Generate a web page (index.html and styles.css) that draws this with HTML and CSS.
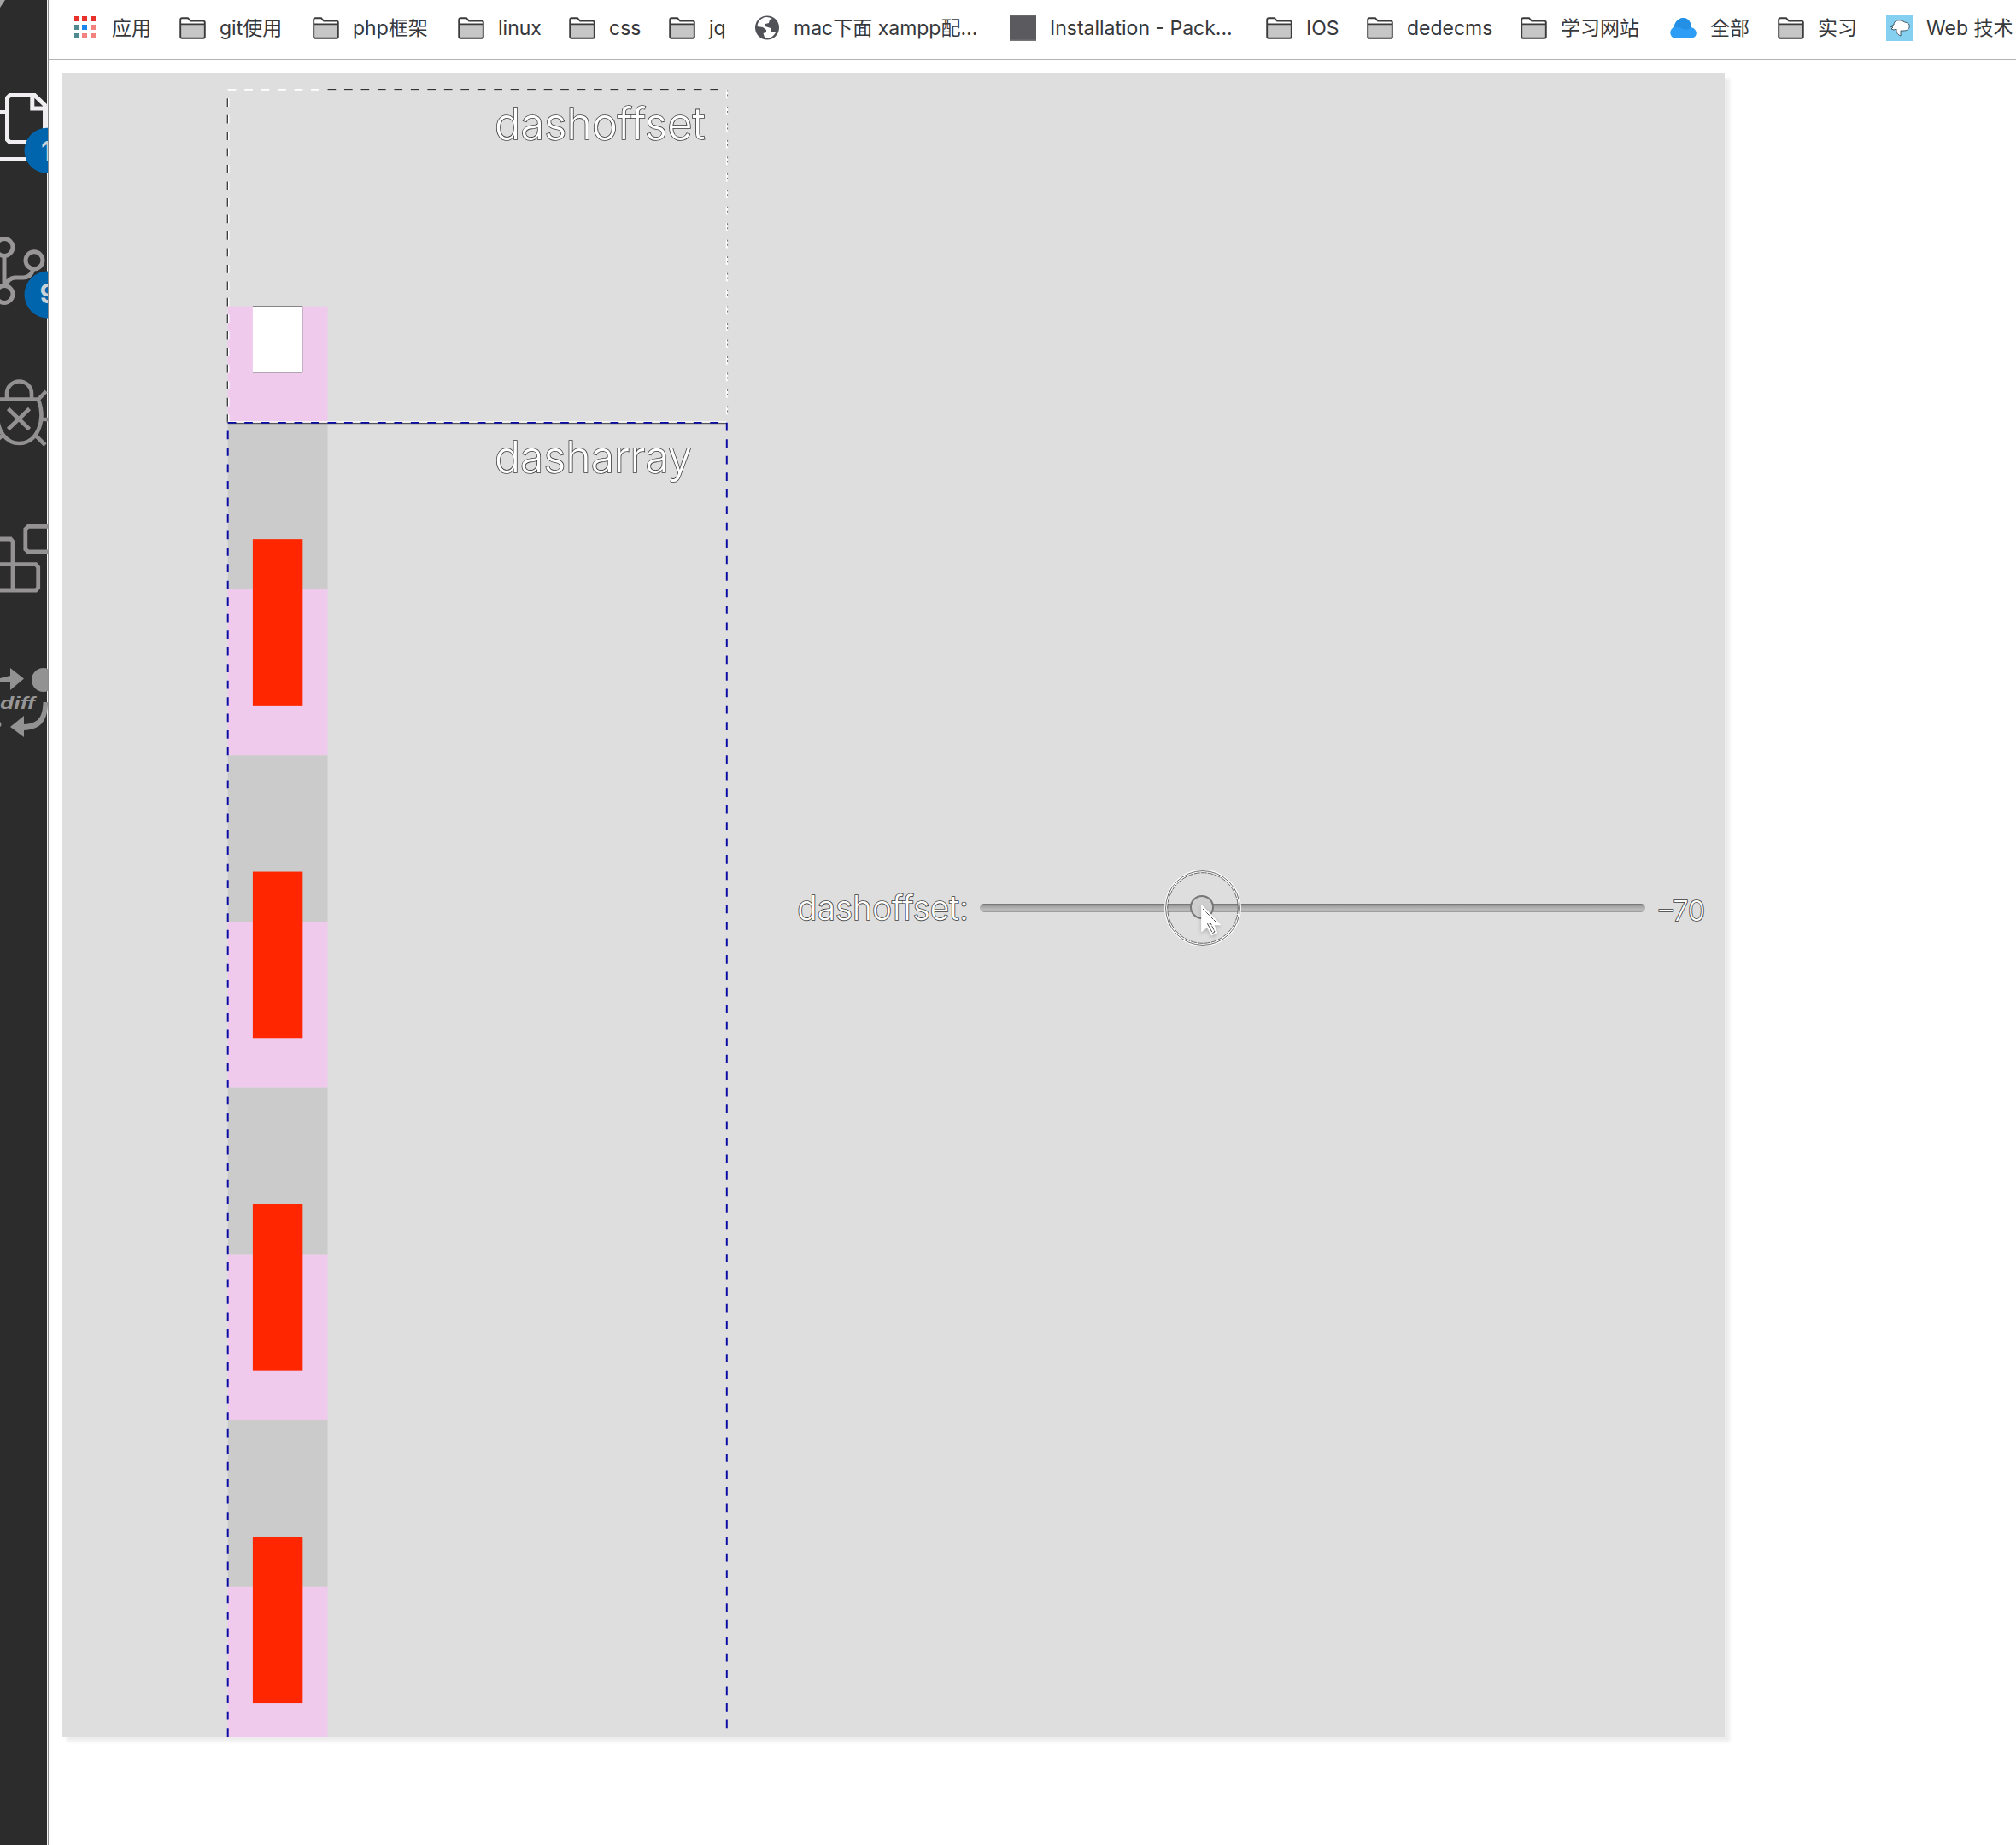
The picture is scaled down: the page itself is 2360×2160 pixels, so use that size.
FILE: index.html
```html
<!DOCTYPE html>
<html lang="zh">
<head>
<meta charset="utf-8">
<title>dashoffset</title>
<link rel="stylesheet" href="styles.css">
</head>
<body>
<svg class="defs" width="0" height="0">
  <symbol id="folder" viewBox="0 0 31 26">
    <path d="M1.2 23V3.2Q1.2 1.2 3.2 1.2H10L13 4.6H28Q29.8 4.6 29.8 6.4V23Q29.8 24.7 28 24.7H3Q1.2 24.7 1.2 23Z" fill="#fff"/>
    <path d="M2 9H29V24H2Z" fill="#c6c6c6"/>
    <path d="M1.2 23V3.2Q1.2 1.2 3.2 1.2H10L13 4.6H28Q29.8 4.6 29.8 6.4V23Q29.8 24.7 28 24.7H3Q1.2 24.7 1.2 23ZM1.2 8.4H29.8" fill="none" stroke="#3b3b3d" stroke-width="1.9"/>
  </symbol>
</svg>
<div class="window">
  <aside class="activity">
    <svg width="55" height="90" viewBox="0 0 55 90"><path d="M0 0H6L0 9Z" fill="#a5a3a3"/></svg>
    <svg width="56" height="160" viewBox="0 90 56 160">
      <g fill="none" stroke="#f0eef0" stroke-width="5">
        <path d="M52.5 124V166.5H11.500L8.500 163.500V114.500L11.500 111.500H40.500L54 124.500M37.800 111V127H55M0 131.500H7M0 186.500H34"/>
      </g>
      <circle cx="55" cy="176.300" r="26.500" fill="#0065ad"/>
      <text x="48" y="188" class="count">1</text>
    </svg>
    <svg width="56" height="170" viewBox="0 250 56 170">
      <g fill="none" stroke="#989696" stroke-width="5">
        <circle cx="5" cy="289.500" r="10"/><circle cx="5" cy="344.500" r="10"/><circle cx="40" cy="304.800" r="10"/>
        <path d="M5 299V335M39 315Q36 325 27 325H17Q10 326 7 333"/>
      </g>
      <circle cx="56" cy="345" r="27.500" fill="#0065ad"/>
      <text x="46.500" y="355" class="count">9</text>
    </svg>
    <svg width="56" height="160" viewBox="0 420 56 160">
      <g fill="none" stroke="#929090" stroke-width="4.600">
        <path d="M8 467V461A14 14 0 0 1 37 461V467M0 467.500H45L54 458M45 468C54 492 44 519 22.500 519C7 519 -3 504 -3 487M49 491H56M41 509L53 521M-2 514L4 509M9.500 478.500L34.500 502.500M34.500 478.500L9.500 502.500"/>
      </g>
    </svg>
    <svg width="56" height="160" viewBox="0 580 56 160">
      <g fill="none" stroke="#949292" stroke-width="4.800">
        <path d="M56 616.300H33L29.800 619.500V643L33 646H56M0 631H12.500L15 634V691M0 660.700H42L44.700 664V688L42 691H0"/>
      </g>
    </svg>
    <svg width="56" height="160" viewBox="0 740 56 160">
      <g fill="#929292">
        <path d="M12 782L28 794.500L12 808V798H0V794L12 791Z"/>
        <circle cx="51" cy="796" r="14"/>
        <path d="M12 851L28 838V848C43 847 50 842 50.500 822H56C56 846 46 854 28 855V863Z"/>
        <circle cx="-2" cy="848" r="3.500"/>
      </g>
      <text x="0" y="829.500" class="diff" textLength="41" lengthAdjust="spacingAndGlyphs">diff</text>
    </svg>
  </aside>
  <main class="browser">
    <nav class="bookmarks">
      <a class="mark"><svg class="ico" viewBox="0 0 31 31"><path fill="#e8302b" d="M1 2h5v6H1zM10 2h6v6h-6zM20 2h6v6h-6z"/><path fill="#4f8991" d="M1 12h5v6H1zM1 22h5v6H1z"/><path fill="#1c86ec" d="M10 12h6v6h-6z"/><path fill="#f3827d" d="M20 12h6v6h-6zM10 22h6v6h-6zM20 22h6v6h-6z"/></svg><span class="near">应用</span></a>
      <a class="mark"><svg class="ico folder"><use href="#folder"/></svg><span>git使用</span></a>
      <a class="mark"><svg class="ico folder"><use href="#folder"/></svg><span>php框架</span></a>
      <a class="mark"><svg class="ico folder"><use href="#folder"/></svg><span>linux</span></a>
      <a class="mark"><svg class="ico folder"><use href="#folder"/></svg><span>css</span></a>
      <a class="mark"><svg class="ico folder"><use href="#folder"/></svg><span>jq</span></a>
      <a class="mark"><svg class="ico" viewBox="0 0 31 31"><circle cx="16" cy="15.500" r="14" fill="#505257"/><path d="M14 3C9 4 4.500 9 4.500 14L11 15L15 18V21L11 22V25L15 27.500C20 28 24 25 26 21L21 20L20 16L14 14V11L18 10L19 6L22 5Q18 2.500 14 3Z" fill="#fff"/><path d="M5 15L11 20L13 27L8 25ZM19 9L22 12L26 11L25 17L22 14H18Z" fill="#505257"/></svg><span>mac下面 xampp配...</span></a>
      <a class="mark"><svg class="ico" viewBox="0 0 31 31"><path d="M0 0H31V31H0Z" fill="#5b5a5e"/><path d="M0 .7H31M0 30.300H31" stroke="#777579" stroke-width="1.400"/></svg><span>Installation - Pack...</span></a>
      <a class="mark"><svg class="ico folder"><use href="#folder"/></svg><span>IOS</span></a>
      <a class="mark"><svg class="ico folder"><use href="#folder"/></svg><span>dedecms</span></a>
      <a class="mark"><svg class="ico folder"><use href="#folder"/></svg><span>学习网站</span></a>
      <a class="mark"><svg class="ico" viewBox="0 0 31 31"><path d="M7 27.500C-1 27.500-2 17 5 15C5 9 10 4 15.500 4C21 4 25 9 24.500 15C33 17 33 27.500 24 27.500Z" fill="#2e9df5"/><path d="M5 15C5 9 10 4 15.500 4C21 4 25 9 24.500 15Q20 19 15 17Q10 14 5 15Z" fill="#238fe5"/></svg><span>全部</span></a>
      <a class="mark"><svg class="ico folder"><use href="#folder"/></svg><span>实习</span></a>
      <a class="mark"><svg class="ico" viewBox="0 0 31 31"><path d="M0 0H31V31H0Z" fill="#85cff1"/><path d="M5 14L9 12C9 7 14 6 19 7.500C22 10 26 9 27 12C28 17 25 19 20 19L17 19V25C12 23 12 20 12 17L9 18L6 17L8 15Z" fill="#fff" stroke="#354b57" stroke-width=".9"/></svg><span>Web 技术</span></a>
    </nav>
    <div class="page">
      <svg class="canvas" viewBox="0 0 500 500">
        <g class="pink">
          <rect x="50" y="70" width="30" height="35"/>
          <rect x="50" y="155" width="30" height="50"/>
          <rect x="50" y="255" width="30" height="50"/>
          <rect x="50" y="355" width="30" height="50"/>
          <rect x="50" y="455" width="30" height="45"/>
        </g>
        <g class="grey">
          <rect x="50" y="105" width="30" height="50"/>
          <rect x="50" y="205" width="30" height="50"/>
          <rect x="50" y="305" width="30" height="50"/>
          <rect x="50" y="405" width="30" height="50"/>
        </g>
        <g class="red">
          <rect x="57.500" y="140" width="15" height="50"/>
          <rect x="57.500" y="240" width="15" height="50"/>
          <rect x="57.500" y="340" width="15" height="50"/>
          <rect x="57.500" y="440" width="15" height="50"/>
        </g>
        <rect x="57.500" y="70" width="15" height="20" fill="#fff"/>
        <path d="M57.500 70H72.400V89.900H57.500" class="edge"/>
        <path d="M50 4.850H200M200 5V105" class="dash light"/>
        <path d="M50.200 105V5" class="dash light"/>
        <path d="M80 4.800H200" class="dash dark"/>
        <path d="M49.900 105V5" class="dash dark"/>
        <path d="M200.200 5V105" class="dash speck"/>
        <path d="M50 104.700H200" stroke="#f4f4f4" stroke-width=".35"/>
        <path d="M50 105.200H200" stroke="#55555c" stroke-width=".28"/>
        <rect x="50" y="105" width="150" height="400" class="dash blue"/>
        <text x="130.200" y="19.900" class="label" font-size="13" textLength="63.300" lengthAdjust="spacingAndGlyphs">dashoffset</text>
        <text x="130.200" y="119.900" class="label" font-size="13" textLength="59.300" lengthAdjust="spacingAndGlyphs">dasharray</text>
        <text x="221.200" y="254.600" class="label" font-size="10" textLength="51.500" lengthAdjust="spacingAndGlyphs">dashoffset:</text>
        <text x="480.300" y="254.800" class="label" font-size="8.200" textLength="13.800" lengthAdjust="spacingAndGlyphs">–70</text>
      </svg>
      <div class="slider">
        <div class="thumb"></div>
        <svg class="pointer" width="100" height="100" viewBox="0 0 100 100">
          <circle cx="50" cy="50" r="43" fill="none" stroke="#fff" stroke-width="3.200"/>
          <circle cx="50" cy="50" r="44" fill="none" stroke="#fff" stroke-width="1.400"/>
          <circle cx="50" cy="50" r="43.400" fill="none" stroke="#444" stroke-width=".8"/>
          <circle cx="50" cy="50" r="41.300" fill="none" stroke="#444" stroke-width=".8" stroke-dasharray="7 1"/>
          <path class="cursor" d="M48.700 46.500V77.500L55.300 72.500L60.300 82L66.700 79L63 69.700H71Z"/>
          <path d="M50 51L66.500 67.500M55.500 68.500L61.500 79.500L64 78L59 67.500Z" fill="none" stroke="#333" stroke-width=".9" stroke-dasharray="5 1"/>
        </svg>
      </div>
    </div>
  </main>
</div>
</body>
</html>
```
FILE: styles.css
```css
* { box-sizing: border-box; }
body { margin: 0; background: #fff; font-family: Inter, "Noto Sans CJK SC", sans-serif; }
.defs { position: absolute; }
.window { display: flex; width: 2360px; height: 2160px; overflow: hidden; }
.activity { width: 57px; flex: none; display: flex; flex-direction: column; background: #2c2c2c; border-right: 1px solid #8d8d8d; box-shadow: inset -1px 0 #f4f4f4; }
.activity svg { display: block; flex: none; }
.count { font: 700 31px Inter, sans-serif; fill: #ccd3d8; }
.diff { font: italic 700 21px "Liberation Sans", sans-serif; fill: #969696; }
.browser { flex: 1; min-width: 0; display: flex; flex-direction: column; }
.bookmarks { height: 70px; flex: none; padding-left: 29px; border-bottom: 1px solid #b4b4b4; display: grid; grid-template-columns: 124px 156px 170px 130px 117px 99px 300px 300px 118px 180px 175px 126px 127px 160px; align-items: center; overflow: hidden; }
.mark { display: flex; align-items: center; gap: 16px; height: 66px; padding-bottom: 4px; color: #36383c; font-size: 23px; line-height: 30px; white-space: nowrap; }
.mark .near { margin-left: -2px; }
.ico { width: 31px; height: 31px; flex: none; }
.ico.folder { height: 26px; }
.page { flex: 1; display: grid; padding: 16px 0 0 15px; }
.canvas { grid-area: 1 / 1; width: 1947px; height: 1947px; display: block; background: #dedede; box-shadow: 6px 6px 4px #ededed; }
.pink { fill: #efcaed; }
.grey { fill: #cbcbcb; }
.red { fill: #ff2600; }
.edge { fill: none; stroke: #77777b; stroke-width: .25; }
.dash { fill: none; stroke-width: .5; stroke-dasharray: 2.5 2.5; }
.light { stroke: #fff; stroke-width: .5; }
.dark { stroke: #333336; stroke-width: .32; }
.speck { stroke: #444; stroke-width: .2; stroke-dasharray: .5 .8 .5 3.2; }
.blue { stroke: #0a0aa4; }
.label { font-family: Inter, sans-serif; font-weight: 300; fill: #fff; stroke: #3c3c3c; stroke-width: .42; paint-order: stroke; }
.slider { grid-area: 1 / 1; position: relative; width: 779px; height: 10px; margin: 972px 0 0 1075px; border-radius: 5px; background: linear-gradient(#717171 0, #a4a4a4 30%, #bdbdbd 70%, #999 100%); }
.thumb { position: absolute; left: 246px; top: -10px; width: 28px; height: 28px; border: 2px solid #777; border-radius: 50%; background: #cfcfcf; }
.pointer { position: absolute; left: 210.500px; top: -45px; }
.cursor { fill: #fff; stroke: #fff; stroke-width: 1; filter: drop-shadow(0 2px 2px rgba(0, 0, 0, .2)); }
```
